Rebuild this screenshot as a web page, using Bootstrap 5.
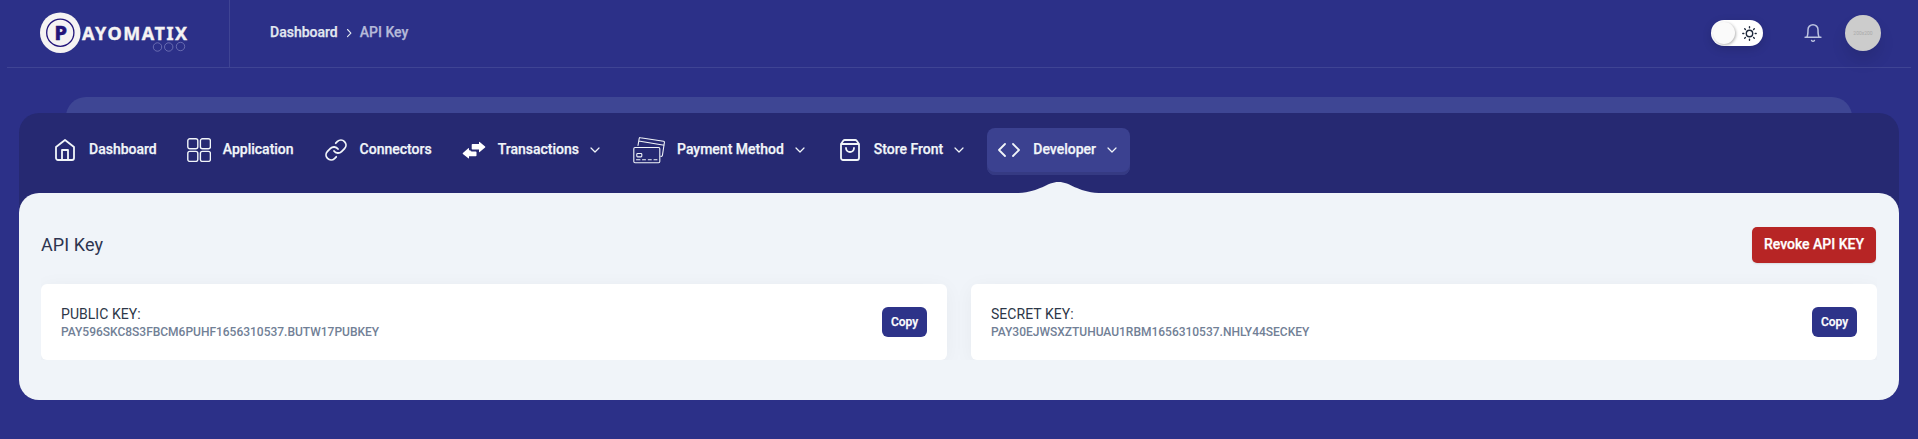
<!DOCTYPE html>
<html lang="en">
<head>
<meta charset="utf-8">
<meta name="viewport" content="width=device-width, initial-scale=1">
<title>API Key - Payomatix</title>
<link href="https://cdn.jsdelivr.net/npm/bootstrap@5.3.0/dist/css/bootstrap.min.css" rel="stylesheet">
<style>
body{background:#2c3088;font:14px/20px Roboto,sans-serif;color:#2d3748;min-height:439px;overflow:hidden}
svg{display:block;flex:none}
.line-ic{fill:none;stroke:currentColor;stroke-width:1.8;stroke-linecap:round;stroke-linejoin:round}
.line-ic.thin{stroke-width:1.1}
.line-ic.fine{stroke-width:1.4}
.topbar{height:68px;margin:0 7px;border-bottom:1px solid #3f4494}
.brand{width:223px;height:67px;border-right:1px solid #3f4494;padding-left:33px}
.brand-word{font:700 18px/20px "Noto Sans","Open Sans",sans-serif;fill:#f5f3f3;stroke:#f5f3f3;stroke-width:.4}
.brand-p{font:800 20px/20px "Noto Sans","Open Sans",sans-serif;fill:#22147a;stroke:#22147a;stroke-width:.5}
.crumbs{padding-left:40px;color:#e2e8f0;font-weight:500;height:64px;-webkit-text-stroke:.25px}
.crumbs .current{color:#b5bad9}
.tools{height:66px;padding-right:30px}
.theme-switch{width:52px;height:26px;background:#fff;border-radius:13px;padding:0 6px 0 2px;box-shadow:0 3px 10px #00000026;color:#1e293b}
.theme-switch i{width:22px;height:22px;border-radius:50%;background:#fafafa;box-shadow:1px 1px 3px #0000004d}
.bell{margin:0 22px 0 40px;color:#bcc3e0}
.avatar-disc{width:36px;height:36px;border-radius:50%;background:#ccc;color:#aaa;font-size:5px;box-shadow:0 10px 15px #0000001a}
.band-wrap{height:45px;overflow:hidden}
.back-band{height:60px;margin:29px 66px 0;background:#3e4694;border-radius:20px 20px 0 0}
.shell{margin:0 19px;background:#262972;border-radius:20px}
.main-nav{height:80px;padding:15px 24px 0;gap:10px}
.main-nav .nav-link{height:47px;padding:0 10px 3px;color:#f1f5f9;font-weight:500;border-radius:8px;gap:12px;-webkit-text-stroke:.25px}
.main-nav .nav-link span{padding-bottom:2px}
.main-nav .nav-link.active{background:#3b4190;box-shadow:inset 0 -3px #353a83}
.main-nav .nav-link.active::after{content:"";position:absolute;left:50%;top:54px;width:80px;height:12px;margin-left:-40px;background:#f0f4f9;clip-path:path("M0 12V11C22 10 28 0 40 0S58 10 80 11V12Z")}
.chev{margin-left:-4px}
.panel{height:207px;background:#f0f4f9;border-radius:20px;padding:34px 22px 0}
.panel h1{font-size:18px;line-height:28px;font-weight:400;margin:0;color:#2d3450;letter-spacing:.1px}
.btn-revoke{--bs-btn-color:#fff;--bs-btn-bg:#b72525;width:124px;height:36px;border-radius:5px;font-size:14px;font-weight:500;padding:0 0 1px;margin-right:1px;box-shadow:0 1px 2px #0000001a;-webkit-text-stroke:.25px}
.keys{margin-top:21px;gap:24px;clip-path:inset(-20px 0 0 0)}
.key-box{height:76px;flex:1;background:#fff;border-radius:6px;padding:0 20px;box-shadow:0 3px 20px #0000000b}
.key-name{line-height:20px;letter-spacing:.05px}
.key-value{font-size:12px;line-height:17px;font-weight:500;color:#718096;letter-spacing:-.01px}
.btn-copy{--bs-btn-color:#fff;--bs-btn-bg:#2d3389;width:45px;height:30px;border-radius:6px;font-size:12px;font-weight:500;padding:0;-webkit-text-stroke:.25px}
</style>
</head>
<body>
<header class="topbar d-flex align-items-start">
  <div class="brand">
    <svg width="160" height="67" viewBox="40 0 160 67">
      <circle cx="60.3" cy="32.7" r="20.3" fill="#f5f3f3"/><circle cx="60.3" cy="32.7" r="13.6" fill="none" stroke="#22147a" stroke-width="1.3"/>
      <text class="brand-p" x="54.500" y="40.300">P</text>
      <text class="brand-word" x="82" y="39.900" textLength="105">AYOMATIX</text>
      <g fill="none" stroke="#7f83c0" stroke-width=".7"><circle cx="157.5" cy="47" r="4.2"/><circle cx="168.7" cy="47" r="4.2"/><circle cx="180.5" cy="46.5" r="4.2"/></g>
    </svg>
  </div>
  <nav class="crumbs d-flex align-items-center flex-grow-1">
    <span>Dashboard</span>
    <svg class="line-ic thin" width="22" height="16" viewBox="0 0 22 16"><path d="M9.500 5.500l3.400 3.600-3.400 3.600"/></svg>
    <span class="current">API Key</span>
  </nav>
  <div class="tools d-flex align-items-center">
    <div class="theme-switch d-flex align-items-center justify-content-between"><i></i>
      <svg class="line-ic fine" width="15" height="15" viewBox="0 0 15 15"><circle cx="7.5" cy="7.5" r="3.2"/><path d="M7.5.8v1M7.5 13.2v1M.8 7.5h1M13.2 7.5h1M2.7 2.7l.7.7M11.6 11.6l.7.7M12.3 2.7l-.7.7M3.4 11.6l-.7.7"/></svg>
    </div>
    <svg class="line-ic bell" width="20" height="20" viewBox="0 0 24 24"><path d="M2.500 17h19M4.500 17C6 15 6 12 6 8a6 6 0 0 1 12 0c0 4 0 7 1.500 9M10.300 21a1.940 1.940 0 0 0 3.400 0"/></svg>
    <div class="avatar-disc d-flex align-items-center justify-content-center">200x200</div>
  </div>
</header>
<div class="band-wrap"><div class="back-band"></div></div>
<div class="shell">
  <nav class="main-nav nav flex-nowrap">
    <a class="nav-link d-flex align-items-center"><svg class="line-ic" width="24" height="24" viewBox="0 0 24 24"><path d="M3 9l9-7 9 7v11a2 2 0 0 1-2 2H5a2 2 0 0 1-2-2z"/><path d="M9 22V12h6v10"/></svg><span>Dashboard</span></a>
    <a class="nav-link d-flex align-items-center"><svg class="line-ic fine" width="24" height="24" viewBox="0 0 24 24"><rect x=".8" y=".8" width="10" height="10" rx="2"/><rect x="13.4" y=".8" width="10" height="10" rx="2"/><rect x=".8" y="13.4" width="10" height="10" rx="2"/><rect x="13.4" y="13.4" width="10" height="10" rx="2"/></svg><span>Application</span></a>
    <a class="nav-link d-flex align-items-center"><svg class="line-ic" width="24" height="24" viewBox="0 0 24 24"><path d="M10 13a5 5 0 0 0 7.54.54l3-3a5 5 0 0 0-7.07-7.07l-1.72 1.71"/><path d="M14 11a5 5 0 0 0-7.54-.54l-3 3a5 5 0 0 0 7.07 7.07l1.71-1.71"/></svg><span>Connectors</span></a>
    <a class="nav-link d-flex align-items-center"><svg width="24" height="24" viewBox="0 0 24 24" fill="#fff"><path d="M10.500 6H17V4.200q0-.8.700-.3l5.400 4.600q.5.500 0 1L17.700 14.100q-.7.500-.7-.3V11.500h-6.500q-.8 0-.8-.8V6.800q0-.8.800-.8zM13.700 13.500q.8 0 .8.800v3.100q0 .8-.8.800H7v1.700q0 .8-.7.300L.9 15.900q-.5-.5 0-1L6.300 10.200q.7-.5.700.3v1.800h1.300q.3 1.200 1.700 1.200z"/></svg><span>Transactions</span><svg class="line-ic chev" width="16" height="16" viewBox="0 0 24 24"><path d="M6 9l6 6 6-6"/></svg></a>
    <a class="nav-link d-flex align-items-center"><svg class="line-ic thin" width="32" height="28" viewBox="0 0 32 28"><rect x=".8" y="11.500" width="26" height="15.200" rx="1.200"/><path d="M5 9.500L6.200 2.500q.2-1 1.200-.8l23.200 3.600q1 .2.800 1.200l-2 13q-.2 1-1.200.8h-.4M5.600 5l25.600 4.200M3.500 23.700h3.500M9.500 23.700h3M15.300 23.700h3M21 23.700h3"/><rect x="3.800" y="17.500" width="5" height="3.400" rx=".8"/></svg><span>Payment Method</span><svg class="line-ic chev" width="16" height="16" viewBox="0 0 24 24"><path d="M6 9l6 6 6-6"/></svg></a>
    <a class="nav-link d-flex align-items-center"><svg class="line-ic" width="24" height="24" viewBox="0 0 24 24"><path d="M3 6l2.300-3.200q.6-.8 1.500-.8h10.400q.9 0 1.500.8L21 6v14a2 2 0 0 1-2 2H5a2 2 0 0 1-2-2zM3 6h18M16 10a4 4 0 0 1-8 0"/></svg><span>Store Front</span><svg class="line-ic chev" width="16" height="16" viewBox="0 0 24 24"><path d="M6 9l6 6 6-6"/></svg></a>
    <a class="nav-link active position-relative d-flex align-items-center"><svg class="line-ic" width="24" height="24" viewBox="0 0 24 24"><path d="M16 18l6-6-6-6M8 6l-6 6 6 6"/></svg><span>Developer</span><svg class="line-ic chev" width="16" height="16" viewBox="0 0 24 24"><path d="M6 9l6 6 6-6"/></svg></a>
  </nav>
  <main class="panel">
    <div class="d-flex justify-content-between align-items-start"><h1 class="pt-1">API Key</h1><button class="btn btn-revoke">Revoke API KEY</button></div>
    <div class="keys d-flex">
      <div class="key-box d-flex align-items-center justify-content-between"><div><div class="key-name">PUBLIC KEY:</div><div class="key-value">PAY596SKC8S3FBCM6PUHF1656310537.BUTW17PUBKEY</div></div><button class="btn btn-copy">Copy</button></div>
      <div class="key-box d-flex align-items-center justify-content-between"><div><div class="key-name">SECRET KEY:</div><div class="key-value">PAY30EJWSXZTUHUAU1RBM1656310537.NHLY44SECKEY</div></div><button class="btn btn-copy">Copy</button></div>
    </div>
  </main>
</div>
<script src="https://cdn.jsdelivr.net/npm/bootstrap@5.3.0/dist/js/bootstrap.bundle.min.js"></script>
</body>
</html>
